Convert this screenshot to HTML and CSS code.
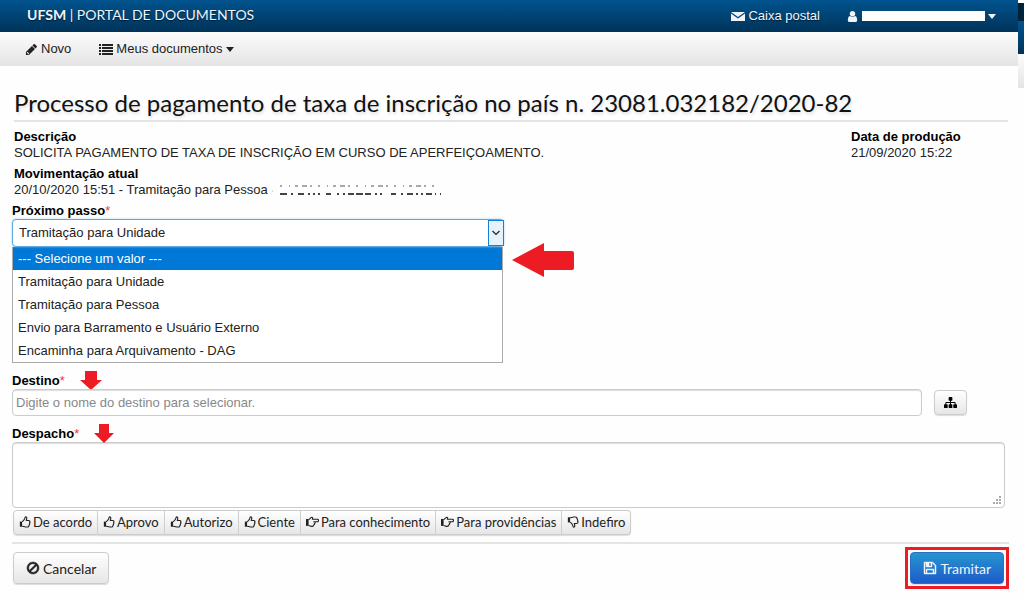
FILE: index.html
```html
<!DOCTYPE html>
<html lang="pt-BR">
<head>
  <meta charset="utf-8">
  <meta name="viewport" content="width=device-width, initial-scale=1.0">
  <title>UFSM | Portal de Documentos</title>
  <link rel="stylesheet" href="styles.css">
</head>
<body>
  <!-- ícones reutilizados -->
  <svg class="sprite" aria-hidden="true">
    <symbol id="thumb-up" viewBox="0 0 14 14">
      <path d="M1 6.5h2.6v6H1z" fill="currentColor"/>
      <path d="M3.600 6.700C5.400 6 6 4.600 6.600 3.400 7 2.500 6.800 1 7.700 1c1.300 0 1.600 1.200 1.300 2.400L8.500 5.300h2.800c1.700 0 1.900 1.600 1 2.200.6.700.4 1.600-.3 2 .4.800.1 1.500-.6 1.800.2.900-.4 1.500-1.400 1.500H7.600c-1.600 0-2.600-.9-4-.9" fill="none" stroke="currentColor" stroke-width="1.300" stroke-linejoin="round"/>
    </symbol>
    <symbol id="hand-right" viewBox="0 1 15 13">
      <path d="M0 4h3v8H0z" fill="currentColor"/>
      <path d="M3 4.600C4.600 4.400 5 2.200 6.600 2c1.200 0 1.300 1.100.7 2.300h5.700c1.900 0 1.900 2.900 0 2.900h-2.800c.6.900.3 1.700-.5 2 .3 1-.2 1.600-.9 1.800 0 1.100-.6 1.600-1.600 1.600-1.800 0-2.600-1-4.200-1.100M10.500 7.200H8.500" fill="none" stroke="currentColor" stroke-width="1.300" stroke-linejoin="round"/>
    </symbol>
  </svg>

  <div class="page">
    <header class="topbar">
      <a class="brand" href="#"><b>UFSM</b> | PORTAL DE DOCUMENTOS</a>
      <nav class="user-menu">
        <a href="#">
          <svg width="14" height="14" viewBox="0 0 14 14"><path d="M0 3h14L7 8zM0 4.500l7 5 7-5V12H0z" fill="currentColor"/></svg>
          Caixa postal
        </a>
        <a href="#" aria-label="Usuário">
          <svg width="13" height="13" viewBox="0 0 1792 1792"><path fill="currentColor" d="M1536 1399q0 109-62.500 187t-150.500 78h-854q-88 0-150.500-78t-62.500-187q0-85 8.500-160.500t31.500-152 58.500-131 94-89 134.500-34.500q131 128 313 128t313-128q76 0 134.500 34.500t94 89 58.500 131 31.500 152 8.500 160.500zm-256-887q0 159-112.500 271.500t-271.500 112.500-271.500-112.500-112.500-271.500 112.500-271.500 271.500-112.500 271.500 112.500 112.500 271.500z"/></svg>
          <span class="user-name"></span>
          <span class="caret"></span>
        </a>
      </nav>
    </header>

    <nav class="menu">
      <a href="#">
        <svg width="13" height="13" viewBox="0 0 1792 1792"><path fill="currentColor" d="M491 1536l91-91-235-235-91 91v107h128v128h107zM960 416l416 416-832 832h-416v-416zM1643 512q0 53-37 90l-166 166-416-416 166-165q36-38 90-38 53 0 91 38l235 234q37 39 37 91z"/></svg>
        Novo
      </a>
      <a href="#">
        <svg width="14" height="12" viewBox="0 0 14 12"><path d="M0 1h2v2H0zM3 1h11v2H3zM0 4h2v2H0zM3 4h11v2H3zM0 7h2v2H0zM3 7h11v2H3zM0 10h2v2H0zM3 10h11v2H3z" fill="currentColor"/></svg>
        Meus documentos
        <span class="caret"></span>
      </a>
    </nav>

    <main>
      <h1>Processo de pagamento de taxa de inscrição no país n. 23081.032182/2020-82</h1>

      <div class="details">
        <dl>
          <dt>Descrição</dt>
          <dd>SOLICITA PAGAMENTO DE TAXA DE INSCRIÇÃO EM CURSO DE APERFEIÇOAMENTO.</dd>
          <dt>Movimentação atual</dt>
          <dd>20/10/2020 15:51 - Tramitação para Pessoa
            <svg class="erased" width="172" height="12" viewBox="0 0 172 12" aria-hidden="true">
              <path d="M1 6h1" stroke="#e8a860"/>
              <path d="M9 1h160" stroke="#555" stroke-dasharray="2 7 1 5 3 4 5 3 2 6"/>
              <path d="M9 9h7M20 9h2M27 9h6M37 9h2M42 9h2M47 9h2M55 9h5M66 9h2M72 9h2M77 9h6M85 9h7M94 9h6M104 9h2M109 9h2M120 9h5M130 9h2M136 9h6M145 9h2M150 9h2M155 9h6M164 9h1M169 9h1" stroke="#444" stroke-width="2"/>
            </svg>
          </dd>
        </dl>
        <dl class="date">
          <dt>Data de produção</dt>
          <dd>21/09/2020 15:22</dd>
        </dl>
      </div>

      <form>
        <div class="next-step">
          <label for="passo">Próximo passo<em>*</em></label>
          <div class="select-box">
            <select id="passo">
              <option>Tramitação para Unidade</option>
            </select>
            <span class="select-arrow">
              <svg width="8" height="6" viewBox="0 0 8 6"><path d="M0.500 1L4 4.500 7.500 1" fill="none" stroke="#222" stroke-width="1.200"/></svg>
            </span>
          </div>
          <ul class="options" role="listbox" aria-label="Próximo passo">
            <li role="option" class="active" aria-selected="true">--- Selecione um valor ---</li>
            <li role="option">Tramitação para Unidade</li>
            <li role="option">Tramitação para Pessoa</li>
            <li role="option">Envio para Barramento e Usuário Externo</li>
            <li role="option">Encaminha para Arquivamento - DAG</li>
          </ul>
          <svg class="arrow-left" width="62" height="34" viewBox="0 0 62 34"><path d="M0 17L32 0v8h28q2 0 2 2v15q0 2-2 2H32v7z" fill="#ed1c24"/></svg>
        </div>

        <div class="label-row">
          <label for="destino">Destino<em>*</em></label>
          <svg width="22" height="19" viewBox="0 0 22 19"><path d="M5 0h12v9h5L11 19 0 9h5z" fill="#ed1c24"/></svg>
        </div>
        <div class="destination">
          <input type="text" id="destino" placeholder="Digite o nome do destino para selecionar.">
          <button type="button" class="btn btn-tree" aria-label="Selecionar na árvore">
            <svg width="13" height="13" viewBox="0 0 1792 1792"><path fill="currentColor" d="M1792 1248v320q0 40-28 68t-68 28h-320q-40 0-68-28t-28-68v-320q0-40 28-68t68-28h96v-192h-512v192h96q40 0 68 28t28 68v320q0 40-28 68t-68 28h-320q-40 0-68-28t-28-68v-320q0-40 28-68t68-28h96v-192h-512v192h96q40 0 68 28t28 68v320q0 40-28 68t-68 28h-320q-40 0-68-28t-28-68v-320q0-40 28-68t68-28h96v-192q0-52 38-90t90-38h512v-192h-96q-40 0-68-28t-28-68v-320q0-40 28-68t68-28h320q40 0 68 28t28 68v320q0 40-28 68t-68 28h-96v192h512q52 0 90 38t38 90v192h96q40 0 68 28t28 68z"/></svg>
          </button>
        </div>

        <div class="label-row">
          <label for="despacho">Despacho<em>*</em></label>
          <svg width="20" height="19" viewBox="0 0 20 19"><path d="M5 0h10v9h5L10 19 0 9h5z" fill="#ed1c24"/></svg>
        </div>
        <textarea id="despacho"></textarea>

        <div class="btn-group">
          <button type="button" class="btn"><svg width="12" height="12"><use href="#thumb-up"/></svg>De acordo</button>
          <button type="button" class="btn"><svg width="12" height="12"><use href="#thumb-up"/></svg>Aprovo</button>
          <button type="button" class="btn"><svg width="12" height="12"><use href="#thumb-up"/></svg>Autorizo</button>
          <button type="button" class="btn"><svg width="12" height="12"><use href="#thumb-up"/></svg>Ciente</button>
          <button type="button" class="btn"><svg width="13" height="12"><use href="#hand-right"/></svg>Para conhecimento</button>
          <button type="button" class="btn"><svg width="13" height="12"><use href="#hand-right"/></svg>Para providências</button>
          <button type="button" class="btn"><svg class="down" width="12" height="12"><use href="#thumb-up"/></svg>Indefiro</button>
        </div>

        <div class="actions">
          <button type="button" class="btn btn-large">
            <svg width="14" height="14" viewBox="0 0 1792 1792"><path fill="currentColor" stroke="currentColor" stroke-width="60" d="M1440 893q0-161-87-295l-754 753q137 89 297 89 111 0 211.500-43.500t173.500-116.500 116-174.500 43-212.500zm-999 299l755-754q-135-91-300-91-148 0-273 73t-198 199-73 274q0 162 89 299zm1223-299q0 157-61 300t-163.500 246-245 164-298.500 61-298.500-61-245-164-163.500-246-61-300 61-299.500 163.500-245.500 245-164 298.500-61 298.500 61 245 164 163.500 245.500 61 299.500z"/></svg>
            Cancelar
          </button>
          <div class="highlight">
            <button type="button" class="btn btn-large btn-primary">
              <svg width="14" height="14" viewBox="0 0 1792 1792"><path fill="currentColor" stroke="currentColor" stroke-width="60" d="M512 1536h768v-384h-768v384zm896 0h128v-896q0-14-10-38.500t-20-34.500l-281-281q-10-10-34-20t-39-10v416q0 40-28 68t-68 28h-576q-40 0-68-28t-28-68v-416h-128v1280h128v-416q0-40 28-68t68-28h832q40 0 68 28t28 68v416zm-384-928v-320q0-13-9.500-22.500t-22.500-9.500h-192q-13 0-22.500 9.500t-9.500 22.500v320q0 13 9.500 22.500t22.500 9.500h192q13 0 22.500-9.500t9.500-22.500zm640 32v928q0 40-28 68t-68 28h-1344q-40 0-68-28t-28-68v-1344q0-40 28-68t68-28h928q40 0 88 20t76 48l280 280q28 28 48 76t20 88z"/></svg>
              Tramitar
            </button>
          </div>
        </div>
      </form>
    </main>
  </div>

  <!-- faixa lateral -->
  <div class="edge">
    <div class="edge-dark"></div>
    <div class="edge-blue"></div>
    <div class="edge-gray"></div>
  </div>
</body>
</html>
```

FILE: styles.css
```css
* {
  box-sizing: border-box;
}

body {
  display: flex;
  margin: 0;
  background: #fefefe;
  color: #222;
  font-family: "Liberation Sans", Arial, sans-serif;
  font-size: 13px;
  line-height: 16px;
}

a {
  color: inherit;
  text-decoration: none;
}

.sprite {
  position: absolute;
  width: 0;
  height: 0;
}

.page {
  flex: 1;
  min-width: 0;
}

/* barra superior */
.topbar {
  display: flex;
  align-items: center;
  justify-content: space-between;
  height: 32px;
  padding: 0 22px 0 27px;
  background: linear-gradient(#00548f, #003358);
  color: #f0f4f8;
  text-shadow: 0 1px 1px #001a30;
}

.brand {
  padding-bottom: 3px;
  font-family: Lato, sans-serif;
  font-size: 14px;
}

.user-menu,
.menu {
  display: flex;
  gap: 28px;
}

.user-menu {
  gap: 26px;
}

.user-menu a,
.menu a {
  display: flex;
  align-items: center;
  gap: 3px;
}

.user-name {
  width: 123px;
  height: 10px;
  background: #fff;
}

.caret {
  border-top: 5px solid currentColor;
  border-left: 4px solid transparent;
  border-right: 4px solid transparent;
}

.menu {
  height: 34px;
  padding: 0 25px;
  background: linear-gradient(#fcfcfc, #e4e4e4);
}

main {
  padding: 22px 13px 9px 12px;
}

h1 {
  margin: 0 -3px 7px 2px;
  padding-bottom: 2px;
  border-bottom: 2px solid #e4e4e4;
  font-family: Lato, sans-serif;
  font-size: 24px;
  font-weight: 400;
  line-height: 30px;
  color: #111;
  text-shadow: 1px 2px 3px #ddd;
}

.details {
  display: flex;
  justify-content: space-between;
  padding: 0 2px;
}

dl,
dd {
  margin: 0;
}

dt,
label {
  font-weight: bold;
  color: #000;
}

dd {
  margin-bottom: 5px;
}

.date {
  width: 152px;
}

.erased {
  vertical-align: middle;
}

/* formulário */
label em {
  color: #f33;
  font-style: normal;
  font-weight: normal;
}

.next-step {
  position: relative;
  width: 492px;
  max-width: 100%;
}

.next-step label {
  display: block;
}

.select-box {
  position: relative;
}

select,
input,
textarea {
  display: block;
  width: 100%;
  border: 1px solid #ccc;
  border-radius: 4px;
  background: #fff;
  color: #222;
  font: inherit;
  box-shadow: inset 0 1px 1px #ddd;
}

select {
  height: 28px;
  padding: 0 6px;
  appearance: none;
  border-color: #5fa9dd;
  box-shadow: 0 0 2px #8cc4ee;
}

.select-arrow {
  position: absolute;
  top: 1px;
  right: 0;
  bottom: 1px;
  display: flex;
  align-items: center;
  justify-content: center;
  width: 16px;
  border: 1px solid #1a7fd4;
  background: #e5f1fb;
  pointer-events: none;
}

.options {
  margin: 0 1px 9px 0;
  padding: 0;
  border: 1px solid #aaa;
  border-top: 0;
  list-style: none;
  background: #fff;
}

.options li {
  padding: 0 5px;
  line-height: 23px;
}

.options .active {
  background: #0078d7;
  color: #fff;
}

.arrow-left {
  position: absolute;
  top: 40px;
  left: 500px;
}

.label-row {
  display: flex;
  align-items: center;
  gap: 15px;
  height: 17px;
}

.destination {
  display: flex;
  align-items: center;
  gap: 12px;
  margin: 0 38px 9px 0;
}

input {
  flex: 1;
  height: 27px;
  padding: 0 3px;
}

input::placeholder {
  color: #888;
}

textarea {
  height: 66px;
  resize: both;
}

/* pontinhos do canto */
textarea::-webkit-resizer {
  background:
    linear-gradient(#aaa, #aaa) 10px 4px / 2px 2px no-repeat,
    linear-gradient(#aaa, #aaa) 10px 7px / 2px 2px no-repeat,
    linear-gradient(#aaa, #aaa) 7px 7px / 2px 2px no-repeat,
    linear-gradient(#aaa, #aaa) 10px 10px / 2px 2px no-repeat,
    linear-gradient(#aaa, #aaa) 7px 10px / 2px 2px no-repeat,
    linear-gradient(#aaa, #aaa) 4px 10px / 2px 2px no-repeat;
}

.btn {
  display: inline-flex;
  align-items: center;
  justify-content: center;
  gap: 3px;
  height: 25px;
  padding: 0 6px;
  border: 1px solid #ccc;
  border-radius: 4px;
  background: linear-gradient(#fff, #e6e6e6);
  box-shadow: 0 1px 1px #ddd;
  color: #222;
  font-family: Lato, sans-serif;
  font-size: 13px;
  white-space: nowrap;
}

.btn-tree {
  width: 33px;
  color: #000;
}

.btn-group {
  display: flex;
  flex-wrap: wrap;
  margin: 2px 1px;
}

.btn-group .btn {
  gap: 2px;
  padding: 0 5px 2px;
  border-radius: 0;
}

.btn-group .btn + .btn {
  border-left: 0;
}

.btn-group .btn:first-child {
  border-radius: 4px 0 0 4px;
}

.btn-group .btn:last-child {
  border-radius: 0 4px 4px 0;
}

.down {
  transform: scaleY(-1);
}

.actions {
  display: flex;
  align-items: center;
  justify-content: space-between;
  margin: 7px -4px 0 0;
  padding: 3px 0 0 1px;
  border-top: 2px solid #e4e4e4;
}

.btn-large {
  height: 32px;
  padding: 0 12px;
  font-size: 14px;
}

.highlight {
  display: flex;
  padding: 2px;
  border: 3px solid #ed1c24;
}

.btn-primary {
  border-color: #2a6fc0;
  background: linear-gradient(#2496cf, #1f5acb);
  color: #f0f4f8;
}

/* faixa lateral */
.edge {
  width: 6px;
  padding-top: 3px;
}

.edge-dark {
  height: 18px;
  background: #00233b;
}

.edge-blue {
  height: 33px;
  background: linear-gradient(#00548f, #003358);
}

.edge-gray {
  height: 34px;
  background: linear-gradient(#fcfcfc, #e4e4e4);
}
```
